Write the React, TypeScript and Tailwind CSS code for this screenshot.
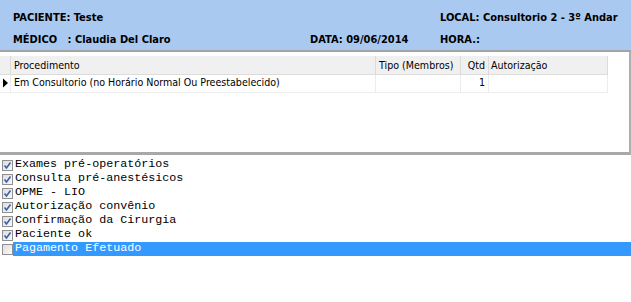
import React from 'react';

// --- Checklist items ---
const checklist = [
  { label: 'Exames pré-operatórios', checked: true },
  { label: 'Consulta pré-anestésicos', checked: true },
  { label: 'OPME - LIO', checked: true },
  { label: 'Autorização convênio', checked: true },
  { label: 'Confirmação da Cirurgia', checked: true },
  { label: 'Paciente ok', checked: true },
  { label: 'Pagamento Efetuado', checked: false, selected: true },
];

function CheckBox({ checked }: { checked: boolean }) {
  return (
    <svg width="11" height="11" viewBox="0 0 11 11" className="shrink-0">
      <defs>
        <linearGradient id="cbg" x1="0" y1="0" x2="1" y2="1">
          <stop offset="0" stopColor="#dcdcdc" />
          <stop offset="1" stopColor="#fbfbfb" />
        </linearGradient>
      </defs>
      <rect x="0.5" y="0.5" width="10" height="10" fill="url(#cbg)" stroke="#8f8f8f" />
      {checked && (
        <path d="M2.5 5.5 L4.5 8 L8.5 2.5" fill="none" stroke="#3b5fa8" strokeWidth="1.6" />
      )}
    </svg>
  );
}

export default function App() {
  return (
    <div className="w-[631px] h-[302px] bg-white overflow-hidden" style={{ fontFamily: 'Tahoma, "DejaVu Sans", sans-serif' }}>
      {/* --- Header --- */}
      <header className="h-[52px] bg-[#a9c9f0] border-b-2 border-[#a3a3a3] text-[11px] font-bold text-black font-['DejaVu_Sans_Condensed','DejaVu_Sans',sans-serif]">
        <div className="flex h-[26px] items-end pl-[13px]">
          <span className="w-[427px]">PACIENTE: Teste</span>
          <span>LOCAL: Consultorio 2 - 3º Andar</span>
        </div>
        <div className="flex h-[22px] items-end pl-[13px]">
          <span className="w-[297px] whitespace-pre">MÉDICO   : Claudia Del Claro</span>
          <span className="w-[130px]">DATA: 09/06/2014</span>
          <span>HORA.:</span>
        </div>
      </header>

      {/* --- Grid --- */}
      <div className="h-[103px] pt-[4px] border-r-2 border-b-[3px] border-r-[#b0b0b0] border-b-[#a8a8a8] text-[10.6px] font-['DejaVu_Sans_Condensed','DejaVu_Sans',sans-serif]">
        <table className="w-[608px] border-collapse">
          <thead>
            <tr className="h-[18px] bg-[#f0f0f0] text-left font-normal">
              <th className="w-[10px] p-0 pt-[2px] border-r border-b border-[#dcdcdc]"></th>
              <th className="w-[365px] pl-[3px] pt-[2px] font-normal border-r border-b border-[#dcdcdc]">Procedimento</th>
              <th className="w-[85px] pl-[3px] pt-[2px] font-normal border-r border-b border-[#dcdcdc]">Tipo (Membros)</th>
              <th className="w-[28px] pr-[3px] pt-[2px] text-right font-normal border-r border-b border-[#dcdcdc]">Qtd</th>
              <th className="pl-[2px] pt-[2px] font-normal border-r border-b border-[#dcdcdc]">Autorização</th>
            </tr>
          </thead>
          <tbody>
            <tr className="h-[18px]">
              <td className="p-0 border-r border-b border-[#ececec]">
                <svg width="10" height="12" viewBox="0 0 10 12">
                  <path d="M3 1.5 L8 6 L3 10.5 Z" fill="#000" />
                </svg>
              </td>
              <td className="pl-[3px] border-r border-b border-[#ececec]">Em Consultorio (no Horário Normal Ou Preestabelecido)</td>
              <td className="border-r border-b border-[#ececec]"></td>
              <td className="pr-[3px] text-right border-r border-b border-[#ececec]">1</td>
              <td className="border-r border-b border-[#ececec]"></td>
            </tr>
          </tbody>
        </table>
      </div>

      {/* --- Checklist --- */}
      <ul className="pt-[3px] pl-[2px] text-[11.7px] font-['Liberation_Mono','Courier_New',monospace]">
        {checklist.map((item) => (
          <li key={item.label} className="flex h-[14px] items-center">
            <CheckBox checked={item.checked} />
            <span
              className={`flex h-[14px] flex-1 items-center pl-[2px] ${item.selected ? 'bg-[#3399ff] text-white' : 'text-black'}`}
            >
              {item.label}
            </span>
          </li>
        ))}
      </ul>
    </div>
  );
}
